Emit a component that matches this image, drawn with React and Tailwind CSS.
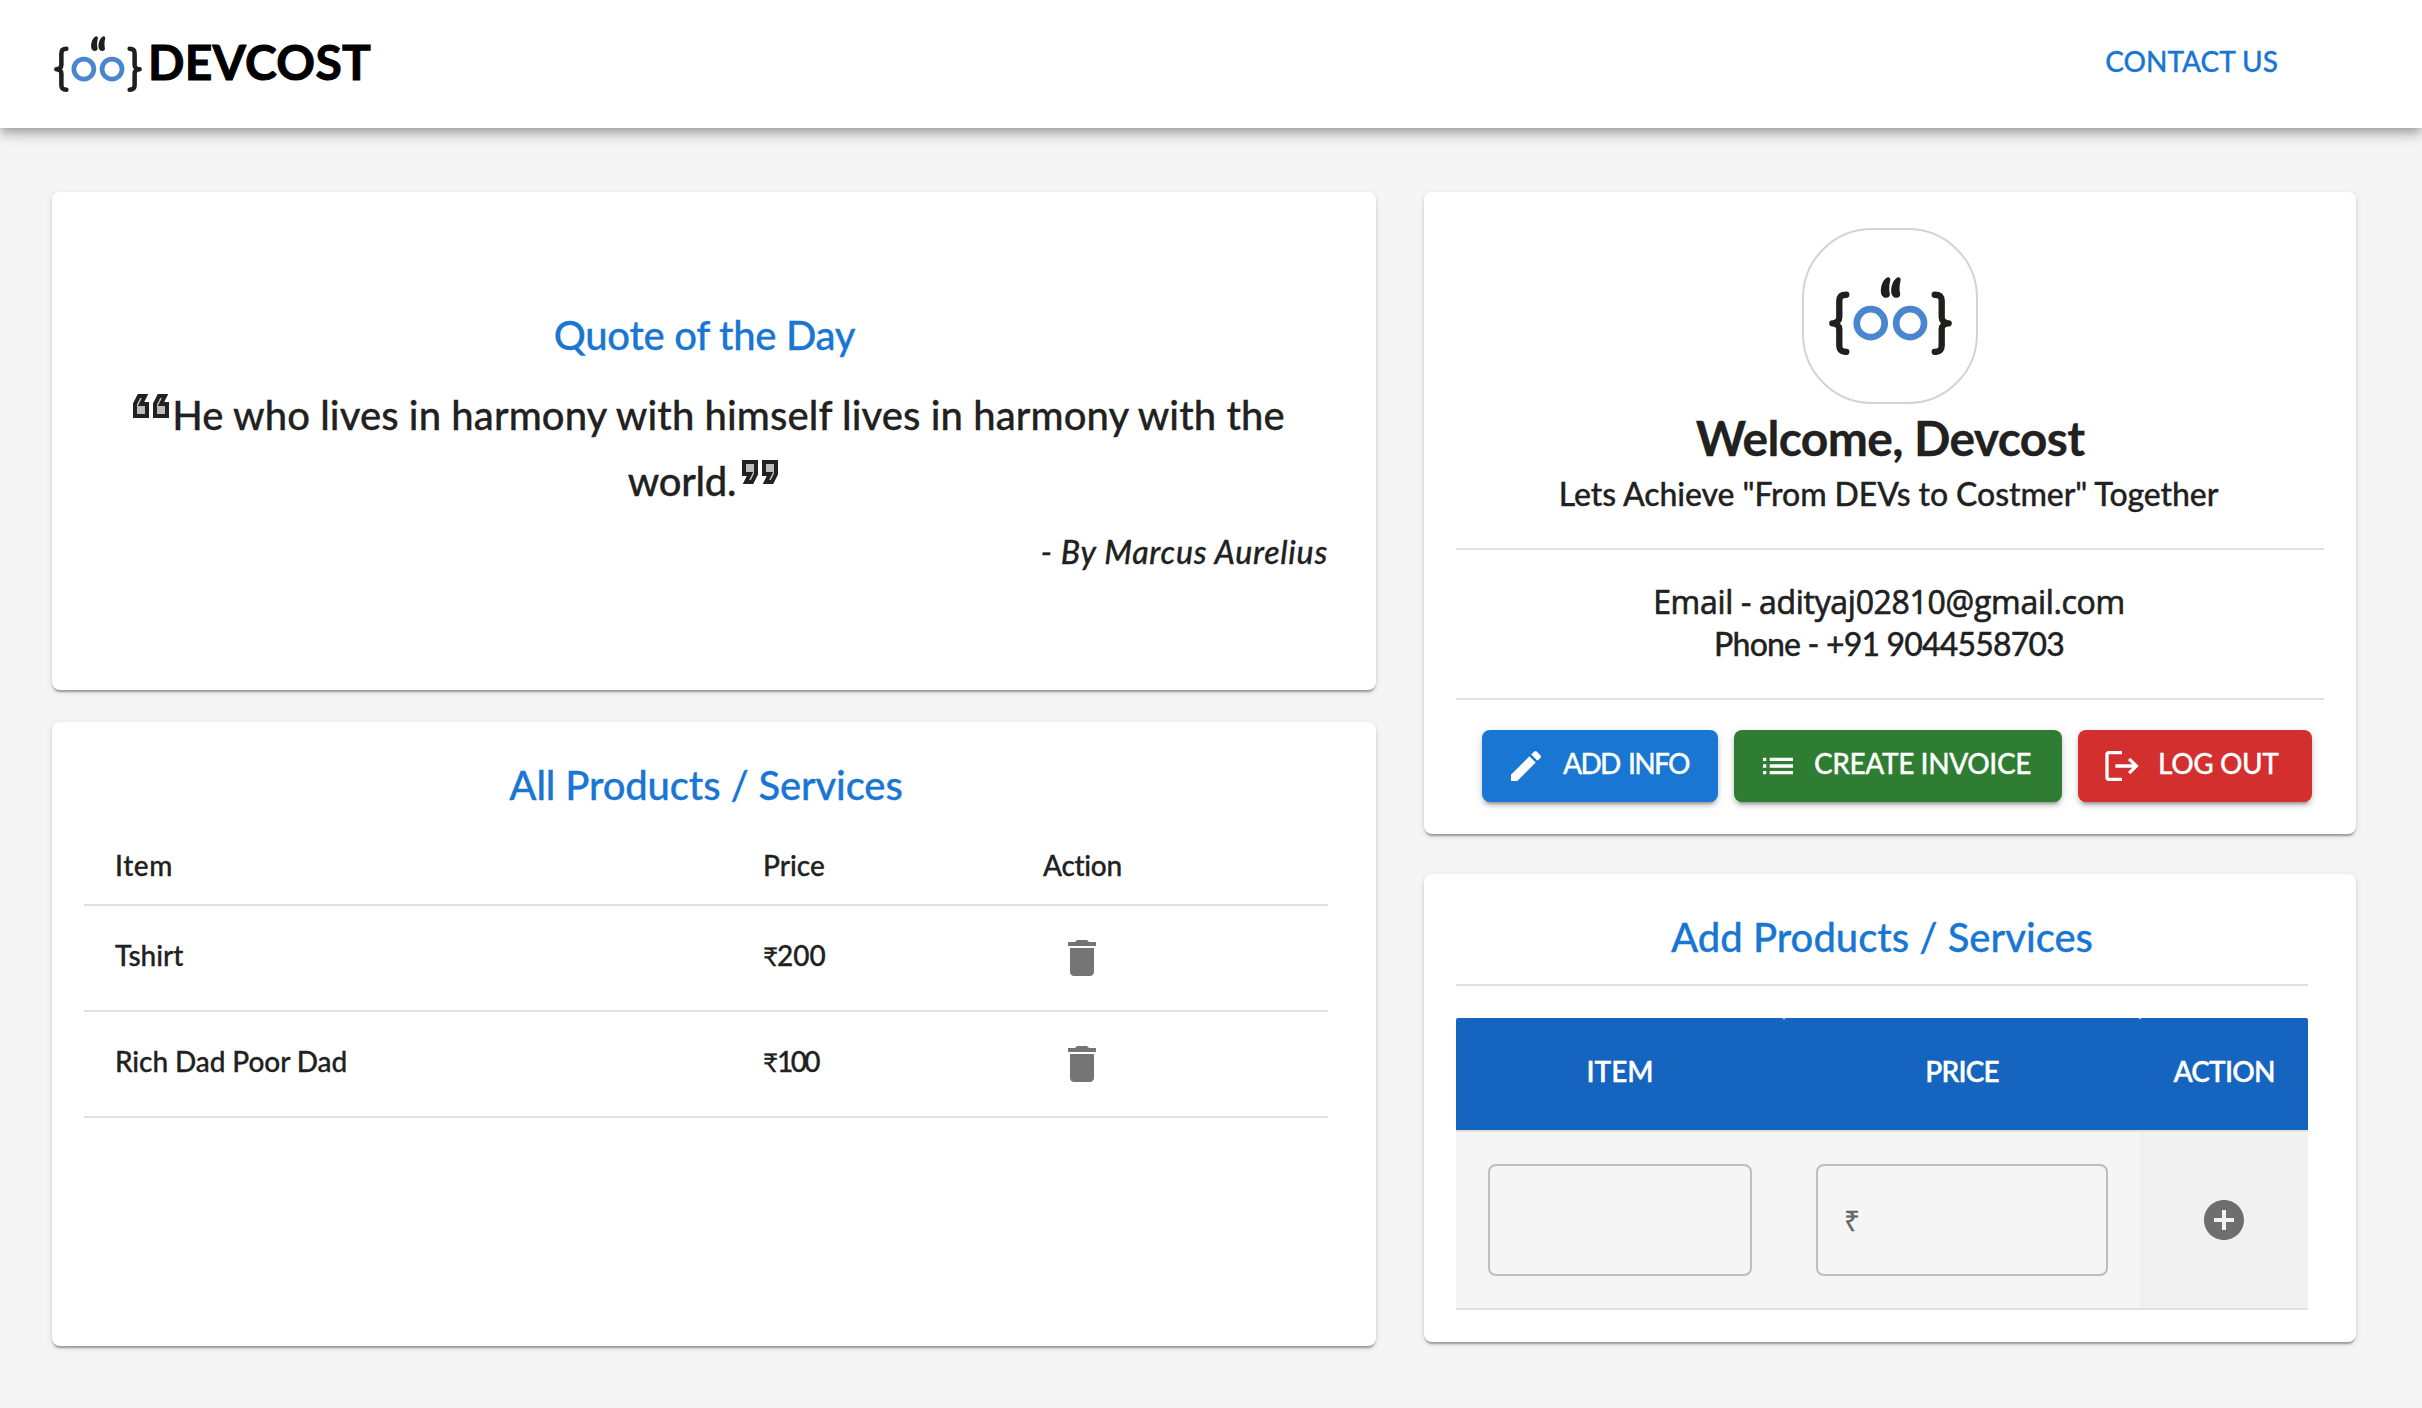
import React from 'react';

const brace =
  'M197 284 C182 284 176 290 176 303 V352 C176 362 168 370 155 370 C168 370 176 378 176 388 V437 C176 450 182 456 197 456';
const tick =
  'M320 232 C309 237 300 256 301 275 C302 288 309 293 317 293 C326 293 329 287 328 281 C325 268 326 255 329 243 C331 234 326 229 320 232Z';

function Logo({ className }) {
  return (
    <svg viewBox="145 231 370 234" className={className}>
      <g fill="none" stroke="#211e1e" strokeWidth="19" strokeLinecap="round" strokeLinejoin="round">
        <path d={brace} />
        <path d={brace} transform="translate(660 0) scale(-1 1)" />
      </g>
      <g fill="none" stroke="#4a86cf" strokeWidth="20">
        <circle cx="270.5" cy="369.5" r="42" />
        <circle cx="389" cy="369.5" r="42" />
      </g>
      <g fill="#211e1e">
        <path d={tick} />
        <path d={tick} transform="translate(31 0)" />
      </g>
    </svg>
  );
}

function Icon({ d, className }) {
  return (
    <svg viewBox="0 0 24 24" fill="currentColor" className={className}>
      <path d={d} />
    </svg>
  );
}

const EDIT =
  'M3 17.25V21h3.75L17.81 9.94l-3.75-3.75L3 17.25zM20.71 7.04c.39-.39.39-1.02 0-1.41l-2.34-2.34a.9959.9959 0 0 0-1.41 0l-1.83 1.83 3.75 3.75 1.83-1.83z';
const LIST =
  'M3 13h2v-2H3v2zm0 4h2v-2H3v2zm0-8h2V7H3v2zm4 4h14v-2H7v2zm0 4h14v-2H7v2zM7 7v2h14V7H7z';
const LOGOUT =
  'm17 7-1.41 1.41L18.17 11H8v2h10.17l-2.58 2.58L17 17l5-5zM4 5h8V3H4c-1.1 0-2 .9-2 2v14c0 1.1.9 2 2 2h8v-2H4V5z';
const TRASH = 'M6 19c0 1.1.9 2 2 2h8c1.1 0 2-.9 2-2V7H6v12zM19 4h-3.5l-1-1h-5l-1 1H5v2h14V4z';
const ADD =
  'M12 2C6.48 2 2 6.48 2 12s4.48 10 10 10 10-4.48 10-10S17.52 2 12 2zm5 11h-4v4h-2v-4H7v-2h4V7h2v4h4v2z';

function QuoteMark({ className }) {
  return (
    <svg viewBox="0 0 24 24" fill="currentColor" className={className}>
      <path
        opacity=".3"
        d="M15 8v4h3.62l-2 4h.76L19 12.76V8zM5 8v4h3.62l-2 4h.76L9 12.76V8z"
      />
      <path d="M18.62 18h-5.24l2-4H13V6h8v7.24L18.62 18zm-2-2h.76L19 12.76V8h-4v4h3.62l-2 4zm-8 2H3.38l2-4H3V6h8v7.24L8.62 18zm-2-2h.76L9 12.76V8H5v4h3.62l-2 4z" />
    </svg>
  );
}

const card =
  'rounded-lg bg-white shadow-[0_4px_2px_-2px_rgba(0,0,0,0.2),0_2px_2px_0_rgba(0,0,0,0.14),0_2px_6px_0_rgba(0,0,0,0.12)]';
const button =
  'flex h-[72px] items-center rounded-lg pl-6 text-[28px] leading-[34px] whitespace-nowrap text-white shadow-[0_6px_2px_-4px_rgba(0,0,0,0.2),0_4px_4px_0_rgba(0,0,0,0.14),0_2px_10px_0_rgba(0,0,0,0.12)]';

const products = [
  { name: 'Tshirt', price: '200', nameClass: '', priceClass: '' },
  { name: 'Rich Dad Poor Dad', price: '100', nameClass: 'tracking-[-0.09px]', priceClass: 'tracking-[-2.6px]' },
];

function Header() {
  return (
    <header className="relative flex h-32 items-start justify-between bg-white pl-[54px] shadow-[0_4px_8px_-2px_rgba(0,0,0,0.2),0_8px_10px_0_rgba(0,0,0,0.14),0_2px_20px_0_rgba(0,0,0,0.12)]">
      <div className="flex items-start">
        <Logo className="mt-9 h-14 w-[88px]" />
        <span className="mt-[33px] ml-1.5 text-[48px] leading-[57px] font-bold tracking-[0.26px] text-black [-webkit-text-stroke:1px_currentColor]">
          DEVCOST
        </span>
      </div>
      <a className="mt-11 mr-36 text-[28px] leading-[34px] text-[#1976d2]">CONTACT US</a>
    </header>
  );
}

function QuoteCard() {
  return (
    <section className={`${card} h-[498px] pt-[119px] pr-12 pl-8`}>
      <h2 className="pr-[3px] text-center text-[40px] leading-[48px] tracking-[-0.3px] text-[#1976d2]">Quote of the Day</h2>
      <p className="mt-[23px] text-center text-[40px] leading-[66px]">
        <span className="flex h-[66px] items-start justify-center whitespace-nowrap">
          <QuoteMark className="size-12 shrink-0 rotate-180" />
          <span className="-ml-[3px] tracking-[0.09px]">He who lives in harmony with himself lives in harmony with the</span>
        </span>
        <span className="flex h-[66px] items-start justify-center">
          <span className="tracking-[-0.3px]">world.</span>
          <QuoteMark className="size-12 shrink-0" />
        </span>
      </p>
      <p className="mt-[18px] text-right text-[32px] leading-10 tracking-[0.75px] italic">- By Marcus Aurelius</p>
    </section>
  );
}

function ProductsCard() {
  const row = 'grid grid-cols-[649px_280px_1fr] border-b-2 border-[#e0e0e0] pl-[30px] text-[28px] leading-[34px]';
  return (
    <section className={`${card} h-[624px] pt-[39px] pr-12 pl-8`}>
      <h2 className="text-center text-[40px] leading-[48px] tracking-[-0.14px] text-[#1976d2]">All Products / Services</h2>
      <div className={`${row} h-[97px] pt-[39px]`}>
        <span className="pl-px tracking-[0.6px]">Item</span>
        <span>Price</span>
        <span className="tracking-[-0.3px]">Action</span>
      </div>
      {products.map((p) => (
        <div key={p.name} className={`${row} h-[106px]`}>
          <span className={`mt-8 pl-px ${p.nameClass}`}>{p.name}</span>
          <span className={`mt-8 ${p.priceClass}`}>
            <span className="inline-block w-3.5 text-[26px] font-normal tracking-normal">₹</span>
            {p.price}
          </span>
          <button className="mt-7 ml-[15px] size-12 text-[#757575]">
            <Icon d={TRASH} className="size-12" />
          </button>
        </div>
      ))}
    </section>
  );
}

function ProfileCard() {
  return (
    <section className={`${card} h-[642px] px-8 pt-9`}>
      <div className="mx-auto flex size-44 items-start justify-center rounded-[70px] border-2 border-[#d3d3d3] pt-[47px]">
        <Logo className="h-[78px] w-[123px]" />
      </div>
      <h1 className="mt-[5px] text-center text-[48px] leading-[58px] font-bold tracking-[-0.65px]">Welcome, Devcost</h1>
      <p className="mt-[7px] pr-[3px] text-center text-[32px] leading-10 tracking-[-0.08px]">
        Lets Achieve "From DEVs to Costmer" Together
      </p>
      <hr className="mt-[34px] border-0 border-t-2 border-[#e0e0e0]" />
      <p className="mt-8 pr-0.5 text-center font-['Open_Sans',sans-serif] text-[32px] leading-10 tracking-[-0.3px] [-webkit-text-stroke:0.7px_currentColor]">
        Email - adityaj02810@gmail.com
      </p>
      <p className="mt-0.5 pr-0.5 text-center text-[32px] leading-10 tracking-[-0.81px]">Phone - +91 9044558703</p>
      <hr className="mt-[34px] border-0 border-t-2 border-[#e0e0e0]" />
      <div className="mt-[30px] flex gap-4 pl-[26px]">
        <button className={`${button} w-[236px] bg-[#1976d2]`}>
          <Icon d={EDIT} className="mr-[17px] size-10" />
          <span className="pb-1.5 tracking-[-1.7px] [word-spacing:3px]">ADD INFO</span>
        </button>
        <button className={`${button} w-[328px] bg-[#2e7d32]`}>
          <Icon d={LIST} className="mr-4 size-10" />
          <span className="pb-1.5 tracking-[-0.4px]">CREATE INVOICE</span>
        </button>
        <button className={`${button} w-[234px] bg-[#d32f2f]`}>
          <Icon d={LOGOUT} className="mr-4 size-10" />
          <span className="pb-1.5 tracking-[-0.4px]">LOG OUT</span>
        </button>
      </div>
    </section>
  );
}

function AddProductCard() {
  const cols = 'grid grid-cols-[328px_356px_168px] border-b-2 border-[#e0e0e0]';
  const head = 'flex items-center justify-center rounded-t-[2px] bg-[#1565c0] pb-1.5';
  return (
    <section className={`${card} h-[468px] pt-[39px] pr-12 pl-8`}>
      <h2 className="text-center text-[40px] leading-[48px] text-[#1976d2]">Add Products / Services</h2>
      <hr className="mt-[23px] border-0 border-t-2 border-[#e0e0e0]" />
      <div className={`${cols} mt-8 h-[114px] text-[28px] leading-[34px] font-semibold text-white`}>
        <span className={head}>ITEM</span>
        <span className={`${head} tracking-[-0.8px]`}>PRICE</span>
        <span className={`${head} tracking-[-0.8px]`}>ACTION</span>
      </div>
      <div className={`${cols} h-[178px] bg-[#f5f5f5]`}>
        <div className="px-8 pt-8">
          <div className="h-28 rounded-lg border-2 border-[#bdbdbd]" />
        </div>
        <div className="px-8 pt-8">
          <div className="flex h-28 items-center rounded-lg border-2 border-[#bdbdbd] pl-[26px] font-['Open_Sans',sans-serif] text-[28px] text-[#666]">
            ₹
          </div>
        </div>
        <div className="flex items-center justify-center bg-[#f1f1f1]">
          <Icon d={ADD} className="size-12 text-[#6e6e6e]" />
        </div>
      </div>
    </section>
  );
}

export default function App() {
  return (
    <div className="min-h-[1408px] bg-[#f5f5f5] font-['Lato',sans-serif] font-medium text-[#212121] [-webkit-text-stroke:0.3px_currentColor]">
      <Header />
      <main className="flex gap-12 pt-16 pl-[52px]">
        <div className="flex w-[1324px] flex-col gap-8">
          <QuoteCard />
          <ProductsCard />
        </div>
        <div className="flex w-[932px] flex-col gap-10">
          <ProfileCard />
          <AddProductCard />
        </div>
      </main>
    </div>
  );
}
